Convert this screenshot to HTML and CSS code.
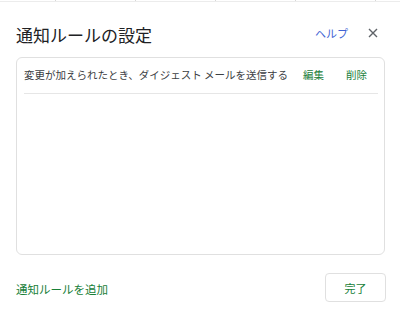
FILE: index.html
```html
<!DOCTYPE html>
<html lang="ja">
<head>
<meta charset="utf-8">
<link rel="stylesheet" href="styles.css">
</head>
<body>
<div class="strip"></div>
<div class="dialog">
  <div class="header">
    <div class="title">通知ルールの設定</div>
    <div class="actions">
      <span class="help">ヘルプ</span>
      <span class="close">
        <svg width="10" height="10" viewBox="0 0 10 10"><path d="M1 1L9 9M9 1L1 9" stroke="#5f6368" stroke-width="1.4" fill="none"/></svg>
      </span>
    </div>
  </div>
  <div class="box">
    <div class="rule">
      <span class="rule-text">変更が加えられたとき、ダイジェスト メールを送信する</span>
      <span class="links"><span class="link">編集</span><span class="link">削除</span></span>
    </div>
  </div>
  <div class="footer">
    <span class="add">通知ルールを追加</span>
    <span class="done">完了</span>
  </div>
</div>
</body>
</html>
```
FILE: styles.css
```css
html, body {
  margin: 0;
  padding: 0;
  background: #ffffff;
}
body {
  width: 400px;
  height: 319px;
  overflow: hidden;
  font-family: "Noto Sans CJK JP", "Noto Sans", sans-serif;
}
.strip {
  height: 1px;
  border-bottom: 1px solid #ececec;
  background: repeating-linear-gradient(90deg, transparent 0 55px, #d8d8d8 55px 56px, transparent 56px 80px);
}
.dialog {
  padding: 21px 15px 0 16px;
  display: flex;
  flex-direction: column;
}
.header {
  display: flex;
  align-items: center;
  justify-content: space-between;
  height: 24px;
}
.title {
  font-size: 17px;
  line-height: 24px;
  color: #202124;
}
.actions {
  display: flex;
  align-items: center;
  margin-top: -5px;
}
.help {
  font-size: 11px;
  color: #3f63d4;
  margin-right: 13px;
}
.close {
  width: 24px;
  height: 24px;
  display: flex;
  align-items: center;
  justify-content: center;
}
.close svg { display: block; }
.box {
  margin-top: 10px;
  height: 196px;
  border: 1px solid #e0e0e0;
  border-radius: 6px;
  padding: 0 6px 0 7px;
}
.rule {
  display: flex;
  align-items: center;
  justify-content: space-between;
  padding: 9px 0 11px 0;
  border-bottom: 1px solid #e6e6e6;
}
.rule-text {
  font-size: 10.5px;
  line-height: 15px;
  color: #3c4043;
}
.links { display: flex; }
.link {
  font-size: 10.5px;
  line-height: 15px;
  color: #188038;
  padding: 0 11px;
}
.footer {
  margin-top: 18px;
  display: flex;
  align-items: center;
  justify-content: space-between;
}
.add {
  font-size: 11.5px;
  color: #188038;
  margin-top: 3px;
}
.done {
  width: 59px;
  height: 27px;
  border: 1px solid #e0e0e0;
  border-radius: 4px;
  display: flex;
  align-items: center;
  justify-content: center;
  font-size: 11px;
  color: #188038;
  margin-right: -1px;
}
```
